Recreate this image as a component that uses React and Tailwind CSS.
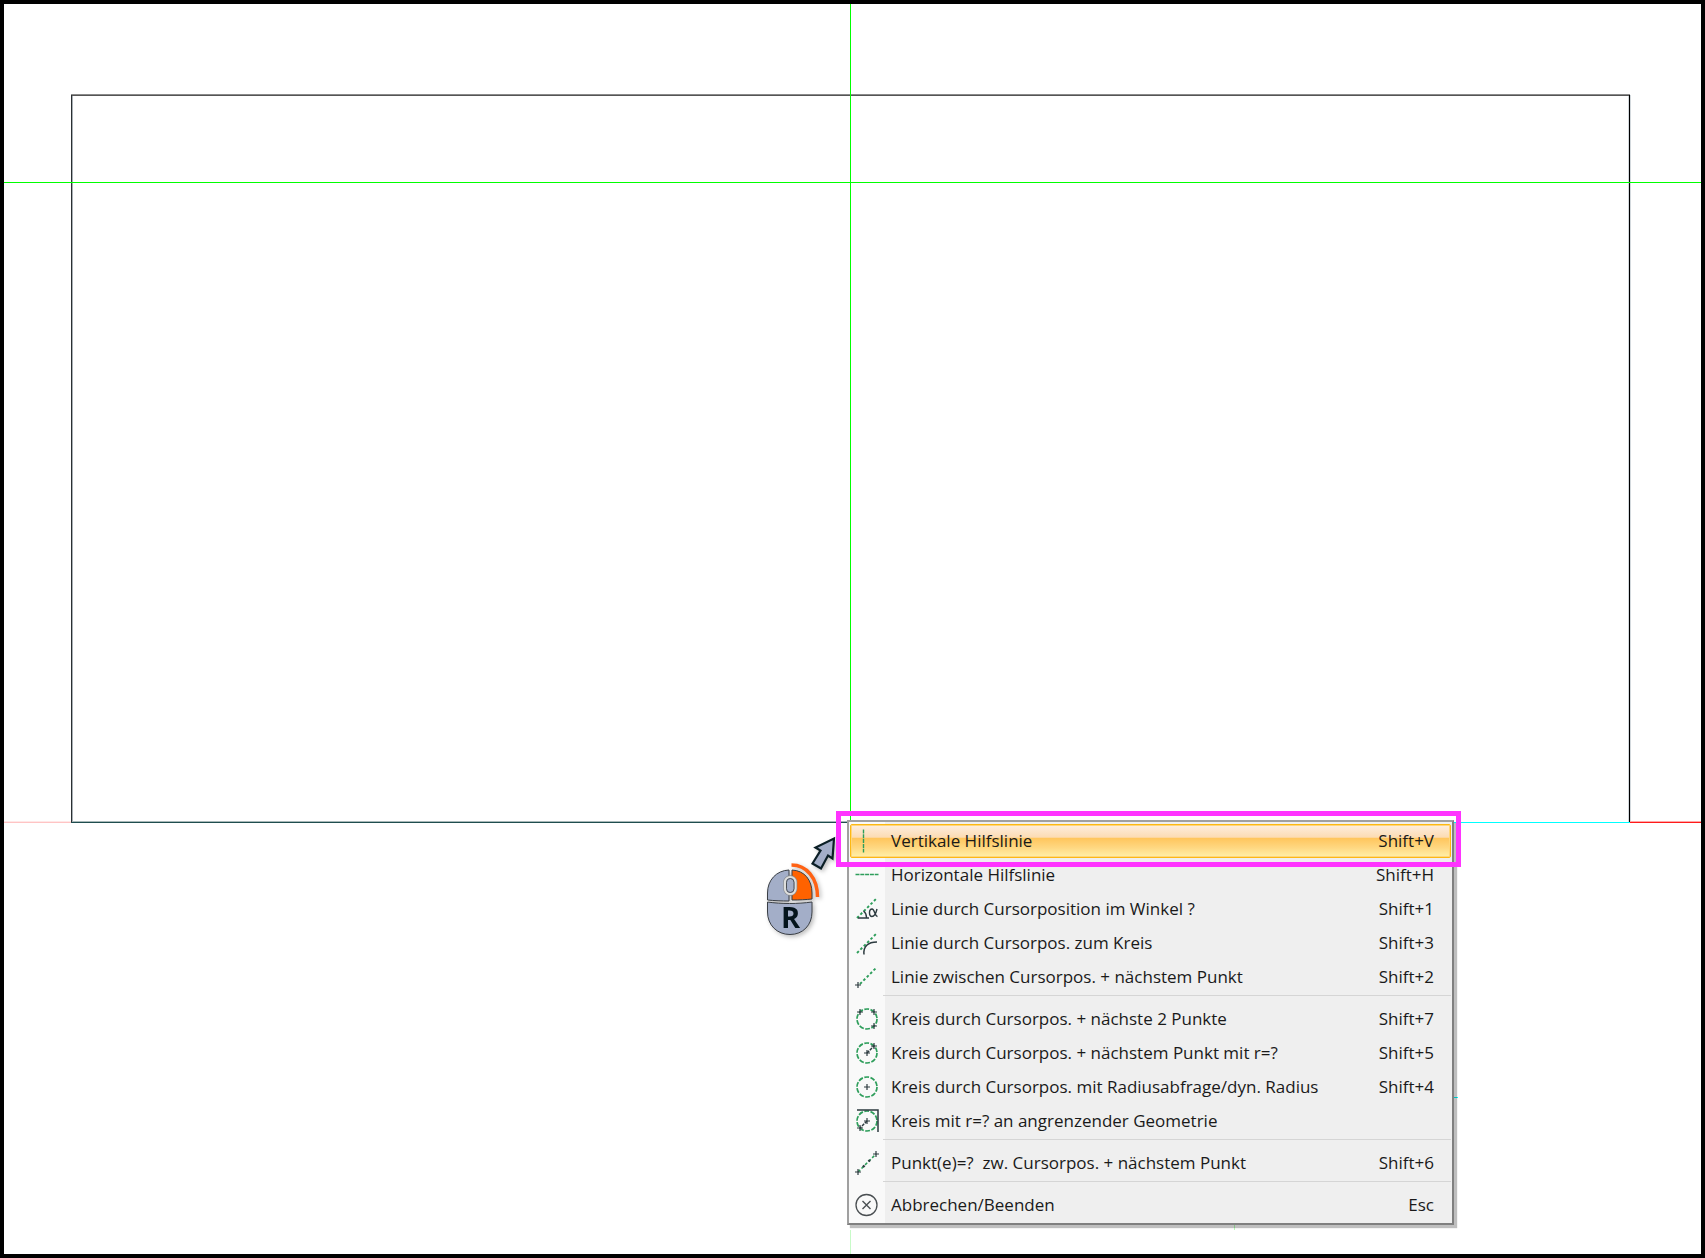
const GREEN = '#2e9e5b';
const DARK = '#2c3a3f';

function Cross({ x, y, size = 3 }) {
  return <path d={`M${x - size} ${y}h${size * 2}M${x} ${y - size}v${size * 2}`} stroke={DARK} strokeWidth="1.2" fill="none" />;
}

function DashedCircle() {
  return <circle cx="12" cy="12" r="10" stroke={GREEN} strokeWidth="1.7" strokeDasharray="4.8 1.5" fill="none" />;
}

const icons = {
  vertical: <path d="M8.5 0.5v23" stroke={GREEN} strokeWidth="1.4" strokeDasharray="4 0.8" />,
  horizontal: <path d="M0.5 11.5h23" stroke={GREEN} strokeWidth="1.4" strokeDasharray="4 0.8" />,
  angle: (
    <>
      <path d="M2 21L22 1" stroke={GREEN} strokeWidth="1.9" strokeDasharray="2.6 2.2" />
      <path d="M3 21h11M8.5 14c2 1.5 3 4 3 6.5" stroke={DARK} strokeWidth="1.4" fill="none" />
      <path d="M22 12c-1.2 5-3 7.5-5 7.5-1.6 0-2.5-1.5-2.5-3.7 0-2.2 1-3.8 2.6-3.8 2.5 0 2.6 7.5 5.4 7.5" stroke={DARK} strokeWidth="1.4" fill="none" />
    </>
  ),
  tangent: (
    <>
      <path d="M2 22L22 2" stroke={GREEN} strokeWidth="1.9" strokeDasharray="2.6 2.2" />
      <path d="M9 23.5c-1-8 4-12.5 13-12.5" stroke={DARK} strokeWidth="1.5" fill="none" />
    </>
  ),
  twoPoints: (
    <>
      <path d="M5 19L22 2" stroke={GREEN} strokeWidth="1.9" strokeDasharray="2.6 2.2" />
      <Cross x={3} y={20} />
    </>
  ),
  circlePoints: (
    <>
      <DashedCircle />
      <Cross x={5} y={5} />
      <Cross x={19} y={5} />
      <Cross x={19} y={19} />
    </>
  ),
  circleRadius: (
    <>
      <DashedCircle />
      <path d="M12 12l7-7" stroke={DARK} strokeWidth="1.5" strokeDasharray="3 1" />
      <Cross x={12} y={12} />
      <Cross x={19} y={5} />
    </>
  ),
  circleCenter: (
    <>
      <DashedCircle />
      <Cross x={12} y={12} />
    </>
  ),
  circleGeometry: (
    <>
      <DashedCircle />
      <path d="M2 1h21v22" stroke={DARK} strokeWidth="1.5" fill="none" />
      <path d="M12 12l-7 7" stroke={DARK} strokeWidth="1.5" strokeDasharray="3 1" />
      <Cross x={12} y={12} />
      <Cross x={5} y={19} />
    </>
  ),
  points: (
    <>
      <path d="M3 21L21 3" stroke={GREEN} strokeWidth="1.6" strokeDasharray="3 2" />
      <path d="M8 16l1.5-1.5M13.5 10.5l1.5-1.5" stroke={DARK} strokeWidth="2.4" />
      <Cross x={3} y={21} />
      <Cross x={21} y={3} />
    </>
  ),
  cancel: (
    <>
      <circle cx="11.5" cy="12" r="10.5" stroke="#4a4f52" strokeWidth="1.3" fill="none" />
      <path d="M7.5 8l8 8M15.5 8l-8 8" stroke="#4a4f52" strokeWidth="1.4" />
    </>
  ),
};

const menuGroups = [
  [
    { icon: 'vertical', label: 'Vertikale Hilfslinie', shortcut: 'Shift+V', active: true },
    { icon: 'horizontal', label: 'Horizontale Hilfslinie', shortcut: 'Shift+H' },
    { icon: 'angle', label: 'Linie durch Cursorposition im Winkel ?', shortcut: 'Shift+1' },
    { icon: 'tangent', label: 'Linie durch Cursorpos. zum Kreis', shortcut: 'Shift+3' },
    { icon: 'twoPoints', label: 'Linie zwischen Cursorpos. + nächstem Punkt', shortcut: 'Shift+2' },
  ],
  [
    { icon: 'circlePoints', label: 'Kreis durch Cursorpos. + nächste 2 Punkte', shortcut: 'Shift+7' },
    { icon: 'circleRadius', label: 'Kreis durch Cursorpos. + nächstem Punkt mit r=?', shortcut: 'Shift+5' },
    { icon: 'circleCenter', label: 'Kreis durch Cursorpos. mit Radiusabfrage/dyn. Radius', shortcut: 'Shift+4' },
    { icon: 'circleGeometry', label: 'Kreis mit r=? an angrenzender Geometrie', shortcut: '' },
  ],
  [{ icon: 'points', label: 'Punkt(e)=?  zw. Cursorpos. + nächstem Punkt', shortcut: 'Shift+6' }],
  [{ icon: 'cancel', label: 'Abbrechen/Beenden', shortcut: 'Esc' }],
];

function Drawing() {
  return (
    <svg className="block w-full h-full" viewBox="4 4 1697 1250" fill="none" shapeRendering="crispEdges">
      {/* Construction axes */}
      <path d="M4 821.5H71" stroke="#ffe8e8" />
      <path d="M4 822.5H71" stroke="#ffc4c4" />
      <path d="M1630 821.5H1701" stroke="#ffa8a8" />
      <path d="M1630 822.5H1701" stroke="#ff1a1a" />
      <path d="M1400 822.5H1630M1400 1097.5H1458" stroke="#00ffff" />
      <path d="M850.5 1230V1254" stroke="#c8fbc8" />
      <path d="M1234.5 1220V1230" stroke="#b8ffb8" />
      {/* Sheet outline */}
      <path d="M71 94.5H1630" stroke="#8a8a8a" />
      <path d="M71 95.5H1630" stroke="#555555" />
      <path d="M71.5 95V822" stroke="#2b3033" />
      <path d="M72.5 96V822" stroke="#a9b0b5" />
      <path d="M1628.5 96V822M1630.5 95V821" stroke="#d3d9dd" />
      <path d="M1629.5 95V822" stroke="#000000" />
      <path d="M72 821.5H850" stroke="#a8b8b8" />
      <path d="M71 822.5H850" stroke="#1f4d4f" />
      {/* Guides */}
      <path d="M4 182.5H1701M850.5 4V822" stroke="#00ff00" />
    </svg>
  );
}

function MouseHint() {
  return (
    <svg className="absolute left-[758px] top-[821px] h-[120px] w-[80px] drop-shadow-[2px_2px_2px_rgba(0,0,0,0.25)]" viewBox="762 825 80 120" fill="none">
      <path d="M834 838.5L832.5 858.5l-4.5-3-7 13-8.5-5 8-13-5-3z" fill="#a3aec8" stroke="#0b1f26" strokeWidth="2.2" />
      <path d="M791.5 865c15 0 26 13 26 32" stroke="#ff6214" strokeWidth="3.5" />
      <path d="M767.5 899v-6c0-13 9-22.5 21.5-23v31c-7 0-15-.3-21.5-1z" fill="#a3aec8" stroke="#3a3f45" />
      <path d="M792 870c12.500.5 20 10 20 23v6c-6 .7-13 1-20 1z" fill="#ff6200" stroke="#3a3f45" />
      <path d="M767.5 902c14 2 30 2 44.5 0v10c0 13-9 22.5-22 22.5s-22.5-9.5-22.5-22.5z" fill="#a3aec8" stroke="#3a3f45" />
      <rect x="785" y="877" width="10.5" height="17" rx="5.25" fill="#a3aec8" stroke="#8a8d90" strokeWidth="3.5" />
      <rect x="785" y="877" width="10.5" height="17" rx="5.25" fill="#a3aec8" stroke="#dededc" strokeWidth="2.2" />
      <rect x="786.5" y="878.5" width="7.5" height="14" rx="3.75" fill="#a3aec8" stroke="#4a4f55" />
      <text x="790.5" y="928" textAnchor="middle" className="font-['Open_Sans',sans-serif] text-[29px] font-bold" fill="#04141c">
        R
      </text>
    </svg>
  );
}

function MenuItem({ item }) {
  return (
    <button
      type="button"
      role="menuitem"
      className={`flex h-[34px] w-full items-center rounded-[2px] border-1 pr-4 text-left ${
        item.active
          ? 'border-[#fdb813] bg-[linear-gradient(to_bottom,#fdeedf_0%,#fcdcb4_38%,#ffc65e_42%,#ffd780_70%,#fff0a8_100%)] shadow-[inset_0_0_0_1px_#ffd67a]'
          : 'border-transparent'
      }`}
    >
      <svg className="ml-1 mr-3 h-6 w-6 shrink-0" viewBox="0 0 24 24" fill="none" aria-hidden="true">
        {icons[item.icon]}
      </svg>
      <span className="flex-1 whitespace-pre">{item.label}</span>
      <span>{item.shortcut}</span>
    </button>
  );
}

function ContextMenu() {
  return (
    <div
      role="menu"
      className="absolute left-[843px] top-[816px] w-[607px] border-2 border-[#a0a0a0] border-r-[#808080] border-b-[#808080] bg-[linear-gradient(to_right,#f9f9f9_36px,#efefef_36px)] px-px pt-0.5 pb-px font-['Open_Sans',sans-serif] text-[17px] leading-6 text-[#1a1a1a] shadow-[3px_3px_1px_rgba(0,0,0,0.25)]"
    >
      {menuGroups.map((group, index) => (
        <div key={group[0].icon}>
          {index > 0 && (
            <div className="h-2 pt-px pl-[33px]">
              <div className="h-px bg-[#d5d5d5]" />
            </div>
          )}
          {group.map((item) => (
            <MenuItem key={item.icon} item={item} />
          ))}
        </div>
      ))}
    </div>
  );
}

function App() {
  return (
    <main className="relative h-screen overflow-hidden border-4 border-black bg-white">
      <Drawing />
      <MouseHint />
      <ContextMenu />
      {/* Highlight around the first entry */}
      <div className="pointer-events-none absolute left-[832px] top-[807px] h-[56px] w-[625px] border-5 border-[#ff33ff]" />
    </main>
  );
}

export default App;
